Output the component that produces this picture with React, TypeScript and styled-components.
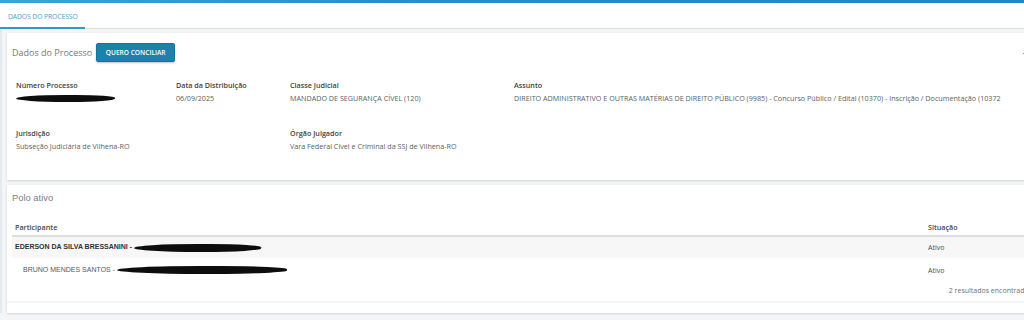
import styled, { createGlobalStyle } from "styled-components";
import { ChevronUp } from "lucide-react";

const GlobalStyle = createGlobalStyle`
  html, body {
    margin: 0;
    padding: 0;
    background: #f4f5f6;
    overflow: hidden;
  }
  body {
    font-family: "Open Sans", "Liberation Sans", sans-serif;
  }
`;

type Field = { label: string; value?: string; redacted?: number; span?: number };

const topFields: Field[] = [
  { label: "Número Processo", redacted: 99 },
  { label: "Data da Distribuição", value: "06/09/2025" },
  { label: "Classe Judicial", value: "MANDADO DE SEGURANÇA CÍVEL (120)" },
  {
    label: "Assunto",
    value:
      "DIREITO ADMINISTRATIVO E OUTRAS MATÉRIAS DE DIREITO PÚBLICO (9985) - Concurso Público / Edital (10370) - Inscrição / Documentação (10372",
  },
];

const bottomFields: Field[] = [
  { label: "Jurisdição", value: "Subseção Judiciária de Vilhena-RO", span: 2 },
  { label: "Órgão Julgador", value: "Vara Federal Cível e Criminal da SSJ de Vilhena-RO", span: 2 },
];

const participants = [
  { name: "EDERSON DA SILVA BRESSANINI -", redacted: 127, main: true, status: "Ativo" },
  { name: "BRUNO MENDES SANTOS -", redacted: 170, main: false, status: "Ativo" },
];

const App = () => {
  return (
    <Page>
      <GlobalStyle />
      <TopBar />
      <Tabs>
        <Tab $active>DADOS DO PROCESSO</Tab>
      </Tabs>
      <Content>
        <Card>
          <CardHeader>
            <Title>Dados do Processo</Title>
            <ConciliarBtn>QUERO CONCILIAR</ConciliarBtn>
            <Collapse>
              <ChevronUp size={8} strokeWidth={3} />
            </Collapse>
          </CardHeader>
          <FieldGrid>
            {topFields.map((f) => (
              <FieldBox key={f.label} $span={f.span}>
                <Label>{f.label}</Label>
                {f.redacted ? (
                  <Redacted $width={f.redacted} />
                ) : (
                  <Value>{f.value}</Value>
                )}
              </FieldBox>
            ))}
          </FieldGrid>
          <FieldGrid $second>
            {bottomFields.map((f) => (
              <FieldBox key={f.label} $span={f.span}>
                <Label>{f.label}</Label>
                <Value>{f.value}</Value>
              </FieldBox>
            ))}
          </FieldGrid>
        </Card>

        <Card $polo>
          <PoloTitle>Polo ativo</PoloTitle>
          <Table>
            <thead>
              <tr>
                <Th>Participante</Th>
                <Th>Situação</Th>
              </tr>
            </thead>
            <tbody>
              {participants.map((p) => (
                <Row key={p.name} $striped={p.main}>
                  <NameCell $main={p.main}>
                    {p.name} <Redacted $width={p.redacted} $inline />
                  </NameCell>
                  <StatusCell>{p.status}</StatusCell>
                </Row>
              ))}
            </tbody>
          </Table>
          <Results>2 resultados encontrados</Results>
          <CardFooter />
        </Card>
      </Content>
    </Page>
  );
};

export default App;

const Page = styled.div`
  width: 1046px;
  height: 320px;
  overflow: hidden;
`;

const TopBar = styled.div`
  height: 3px;
  background: linear-gradient(90deg, #3fa3d3 0%, #2b8cc6 40%, #2384bf 100%);
`;

const Tabs = styled.div`
  height: 25px;
  background: #fff;
  border-bottom: 1px solid #dcdfe1;
  display: flex;
`;

const Tab = styled.div<{ $active?: boolean }>`
  width: 85px;
  box-sizing: border-box;
  padding: 2px 0 0 8px;
  display: flex;
  align-items: center;
  font-size: 6.8px;
  color: #4a9fc8;
  letter-spacing: -0.1px;
  border-bottom: 2px solid ${(p) => (p.$active ? "#3497c9" : "transparent")};
  margin-bottom: -1px;
`;

const Content = styled.div`
  padding: 4px 0 0 5px;
  border-left: 2px solid #e3eaef;
  display: flex;
  flex-direction: column;
  gap: 5px;
`;

const Card = styled.div<{ $polo?: boolean }>`
  background: #fff;
  box-shadow: 0 1px 2px rgba(0, 0, 0, 0.12), 0 0 1px rgba(0, 0, 0, 0.08);
  height: ${(p) => (p.$polo ? "128px" : "147px")};
  box-sizing: border-box;
  padding: ${(p) => (p.$polo ? "7px 0 0 5px" : "10px 0 0 5px")};
  display: flex;
  flex-direction: column;
`;

const CardHeader = styled.div`
  display: flex;
  align-items: center;
  height: 19px;
  padding-right: 17px;
`;

const Title = styled.div`
  font-size: 9px;
  color: #727a80;
  margin-right: 4px;
`;

const ConciliarBtn = styled.button`
  height: 19px;
  width: 79px;
  padding: 0;
  background: #1b82ab;
  border: 1px solid #16739a;
  border-radius: 2px;
  color: #fff;
  font-family: "Open Sans", "Liberation Sans", sans-serif;
  font-size: 6.6px;
  font-weight: 600;
  box-shadow: 0 1px 2px rgba(0, 0, 0, 0.25);
  cursor: pointer;
`;

const Collapse = styled.span`
  margin-left: auto;
  color: #999;
  display: flex;
`;

const FieldGrid = styled.div<{ $second?: boolean }>`
  display: grid;
  grid-template-columns: 160px 114px 224px 1fr;
  padding-left: 4px;
  margin-top: ${(p) => (p.$second ? "23px" : "17px")};
`;

const FieldBox = styled.div<{ $span?: number }>`
  grid-column: span ${(p) => p.$span || 1};
  display: flex;
  flex-direction: column;
`;

const Label = styled.div`
  font-size: 7.2px;
  font-weight: 600;
  color: #3c3f42;
  line-height: 12px;
  margin-bottom: 1px;
`;

const Value = styled.div`
  font-size: 7.2px;
  color: #5a5f63;
  line-height: 12px;
  white-space: nowrap;
`;

const Redacted = styled.span<{ $width: number; $inline?: boolean }>`
  display: inline-block;
  width: ${(p) => p.$width}px;
  height: ${(p) => (p.$inline ? "8px" : "7px")};
  margin-top: ${(p) => (p.$inline ? "0" : "3px")};
  background: #0d0d0d;
  border-radius: 50% 40% 45% 50%;
  vertical-align: middle;
`;

const PoloTitle = styled.div`
  font-family: "Liberation Sans", Arial, sans-serif;
  font-size: 9.4px;
  color: #7a7f83;
  line-height: 12px;
`;

const Table = styled.table`
  margin-top: 14px;
  width: calc(100% - 5px);
  border-collapse: collapse;
`;

const Th = styled.th`
  text-align: left;
  font-size: 7.2px;
  font-weight: 600;
  color: #44484b;
  height: 17px;
  padding: 0 3px;
  vertical-align: middle;
  border-bottom: 2px solid #dedede;
  &:last-child {
    width: 110px;
  }
`;

const Row = styled.tr<{ $striped?: boolean }>`
  background: ${(p) => (p.$striped ? "#f7f7f7" : "#fff")};
  height: ${(p) => (p.$striped ? "22px" : "24px")};
`;

const NameCell = styled.td<{ $main?: boolean }>`
  font-family: "Liberation Sans", Arial, sans-serif;
  font-size: 7px;
  font-weight: ${(p) => (p.$main ? 700 : 400)};
  color: ${(p) => (p.$main ? "#2f3234" : "#55595c")};
  padding: 0 3px 0 ${(p) => (p.$main ? "3px" : "11px")};
  vertical-align: middle;
  white-space: nowrap;
`;

const StatusCell = styled.td`
  font-size: 7px;
  color: #4a4e51;
  padding: 0 3px;
  vertical-align: middle;
`;

const Results = styled.div`
  text-align: right;
  font-size: 7px;
  color: #6d7275;
  padding-right: 14px;
  margin-top: 3px;
  line-height: 12px;
`;

const CardFooter = styled.div`
  margin-top: auto;
  margin-left: -5px;
  height: 10px;
  border-top: 2px solid #f3f3f3;
`;
